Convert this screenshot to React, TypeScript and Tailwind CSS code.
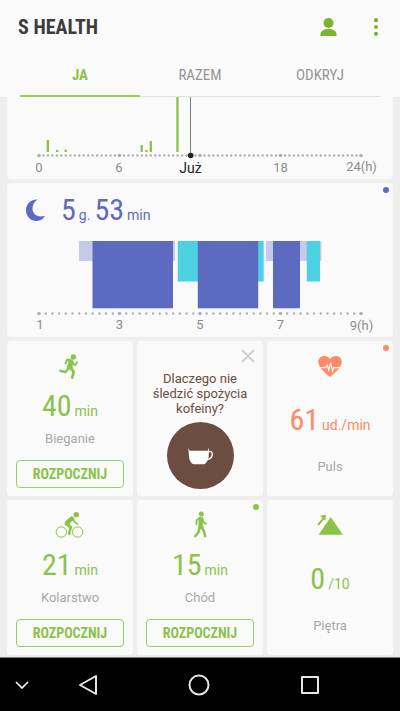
import React from "react";

const condensed = "font-['Roboto_Condensed','Roboto',sans-serif]";

function Dot({ className }: { className: string }) {
  return <span className={`absolute top-1 right-1 h-1.5 w-1.5 rounded-full ${className}`} />;
}

type AxisProps = { y: number; steps: number; majorEvery: number };

function DottedAxis({ y, steps, majorEvery }: AxisProps) {
  return (
    <g fill="#b0b0b0">
      {Array.from({ length: steps + 1 }, (_, i) => (
        <circle key={i} cx={39 + (322 * i) / steps} cy={y} r={i % majorEvery === 0 ? 1.8 : 1.2} />
      ))}
    </g>
  );
}

function StepsChart() {
  const bars = [
    [46.7, 140, 12],
    [56, 149.8, 2.2],
    [64.5, 149.5, 2.5],
    [140.5, 145, 7],
    [145.2, 150, 2],
    [149.7, 141, 11],
    [176.3, 97, 55],
  ];
  return (
    <svg viewBox="7 97 386 82" className="block w-full" role="img" aria-label="Kroki">
      {bars.map(([x, y, h]) => (
        <rect key={x} x={x} y={y} width="2.3" height={h} fill="#8bc34a" />
      ))}
      <DottedAxis y={155.5} steps={72} majorEvery={18} />
      <path d="M190.5 97V155" stroke="#808080" strokeWidth="1" />
      <circle cx="190.7" cy="155.5" r="2.8" fill="#212121" />
      <g fill="#8c8c8c" fontSize="13" textAnchor="middle">
        <text x="39" y="172">0</text>
        <text x="119" y="172">6</text>
        <text x="280.5" y="172">18</text>
        <text x="361.5" y="171">24(h)</text>
        <text x="190.5" y="173" fontSize="14" fill="#212121">Już</text>
      </g>
    </svg>
  );
}

function SleepChart() {
  return (
    <svg viewBox="7 236 386 101" className="block w-full" role="img" aria-label="Sen">
      <g fill="#c5cae9">
        <rect x="79" y="241" width="96" height="20" />
        <rect x="266" y="241" width="55.5" height="20" />
      </g>
      <g fill="#4dd0e1">
        <rect x="177.7" y="241" width="25" height="40.5" />
        <rect x="254" y="241" width="9.7" height="40.5" />
        <rect x="306.7" y="241" width="13.3" height="40.5" />
      </g>
      <g fill="#5c6bc0">
        <rect x="92.5" y="241" width="80.5" height="67.3" />
        <rect x="197.8" y="241" width="60.4" height="67.3" />
        <rect x="273" y="241" width="27" height="67.3" />
      </g>
      <DottedAxis y={313.5} steps={48} majorEvery={12} />
      <g fill="#8c8c8c" fontSize="13" textAnchor="middle">
        <text x="40" y="329">1</text>
        <text x="119.5" y="329">3</text>
        <text x="200" y="329">5</text>
        <text x="280.5" y="329">7</text>
        <text x="361.5" y="330">9(h)</text>
      </g>
    </svg>
  );
}

function Value({ value, unit, className }: { value: string; unit: string; className: string }) {
  return (
    <p className={`flex items-baseline gap-[3px] leading-8 ${className}`}>
      <span className={`text-[30px] ${condensed}`}>{value}</span>
      <span className="text-sm">{unit}</span>
    </p>
  );
}

type TileProps = { icon: React.ReactNode; value: string; unit: string; label: string; dot?: boolean };

function ActivityTile({ icon, value, unit, label, dot }: TileProps) {
  return (
    <section className="relative flex flex-col items-center rounded-sm bg-[#fafafa] px-[9px] pt-3 pb-2">
      {dot && <Dot className="bg-[#8bc34a]" />}
      {icon}
      <Value value={value} unit={unit} className="mt-[10px] text-[#8bc34a]" />
      <p className="mt-[9px] text-[13px] leading-4 text-[#a8a8a8]">{label}</p>
      <button
        type="button"
        className={`mt-[13px] h-7 w-full rounded-sm border border-[#9ccc65] text-sm font-bold text-[#8bc34a] ${condensed}`}
      >
        ROZPOCZNIJ
      </button>
    </section>
  );
}

function StatTile({ icon, value, unit, label, color, dot }: TileProps & { color: string }) {
  return (
    <section className="relative flex flex-col items-center rounded-sm bg-[#fafafa] pt-3">
      {dot && <Dot className="bg-[#ff8a65]" />}
      {icon}
      <Value value={value} unit={unit} className={`mt-6 ${color}`} />
      <p className="mt-[23px] text-[13px] leading-4 text-[#a8a8a8]">{label}</p>
    </section>
  );
}

const iconSize = "block h-[27px] w-[27px] shrink-0 overflow-visible";

const RunIcon = () => (
  <svg viewBox="171 54 81 81" className={iconSize} fill="none" stroke="#8bc34a" strokeLinejoin="round">
    <circle cx="220" cy="66" r="8" fill="#8bc34a" stroke="none" />
    <path d="M199 72L213 73L221 81L216 94L219 101L204 103L201 97L207 80Z" fill="#8bc34a" strokeWidth="2" />
    <path d="M210 75H201L196 87" strokeWidth="6" />
    <path d="M214 78L220 88L227 89L232 80" strokeWidth="6" />
    <path d="M207 98L197 111L178 107" strokeWidth="7" />
    <path d="M210 98L221 110L216 131" strokeWidth="8" />
  </svg>
);

const BikeIcon = () => (
  <svg viewBox="171 54 81 81" className={iconSize} fill="none" stroke="#8bc34a" strokeLinejoin="round">
    <circle cx="229" cy="62" r="8" fill="#8bc34a" stroke="none" />
    <circle cx="184" cy="114" r="15.5" strokeWidth="3" />
    <circle cx="233" cy="114" r="15.5" strokeWidth="3" />
    <path d="M216 67L223 74L214 83L207 90L215 98L211 106L204 97L195 92V84L205 74Z" fill="#8bc34a" strokeWidth="2" />
    <path d="M218 72L223 83L234 92" strokeWidth="5" />
    <path d="M200 88L212 99L207 122" strokeWidth="8" />
  </svg>
);

const WalkIcon = () => (
  <svg viewBox="169 54 81 81" className={iconSize} fill="none" stroke="#8bc34a" strokeLinejoin="round">
    <circle cx="212" cy="60" r="7.5" fill="#8bc34a" stroke="none" />
    <path d="M204 70H215L219 79L215 92L218 102L204 104L205 84Z" fill="#8bc34a" strokeWidth="2" />
    <path d="M208 71L198 79L197 93" strokeWidth="5.5" />
    <path d="M214 73L218 84L228 91" strokeWidth="5.5" />
    <path d="M208 98L203 115L192 129" strokeWidth="7.5" />
    <path d="M212 98L220 112L224 130" strokeWidth="7.5" />
  </svg>
);

const HeartIcon = () => (
  <svg viewBox="165 54 81 81" className={iconSize}>
    <path
      d="M204 126C198 121 170 101 169 82C168 69 178 63 187 63C196 63 201 67 204 73C207 67 212 63 221 63C230 63 240 69 239 82C238 101 210 121 204 126Z"
      fill="#ff8a65"
    />
    <path d="M170 98H190L196 91L200 106L206 84L212 109L216 98H238" fill="none" stroke="#fafafa" strokeWidth="3.5" />
  </svg>
);

const FloorsIcon = () => (
  <svg viewBox="165 54 81 81" className={iconSize} fill="#8bc34a">
    <path d="M206 69L243 122H170Z" />
    <path d="M168 93L184 74" stroke="#8bc34a" strokeWidth="6" />
    <path d="M174 65L192 62L190 80Z" />
  </svg>
);

const navButton = "flex flex-1 items-center justify-center";

export default function App() {
  return (
    <div className="flex min-h-screen flex-col bg-[#eeeeee] font-['Roboto',sans-serif]">
      <header className="bg-[#fafafa]">
        <div className="flex h-[53px] items-center pr-[21px] pl-[18px]">
          <h1 className={`flex-1 text-xl font-bold text-[#3c3c3c] ${condensed}`}>S HEALTH</h1>
          <button type="button" aria-label="Profil" className="mr-9">
            <svg viewBox="0 0 17 18" className="block h-[18px] w-[17px]" fill="#7cb52b">
              <circle cx="8.5" cy="5" r="5" />
              <path d="M0.5 18V16C0.5 13 4 11 8.5 11S16.5 13 16.5 16V18Z" />
            </svg>
          </button>
          <button type="button" aria-label="Więcej">
            <svg viewBox="0 0 6 18" className="block h-[18px] w-1.5" fill="#7cb52b">
              <circle cx="3" cy="2.2" r="2.1" />
              <circle cx="3" cy="9" r="2.1" />
              <circle cx="3" cy="15.8" r="2.1" />
            </svg>
          </button>
        </div>
        <div role="tablist" className={`mx-5 grid h-11 grid-cols-3 text-[15px] text-[#959595] ${condensed}`}>
          <button type="button" role="tab" aria-selected="true" className="border-b-2 border-[#92d450] pt-0.5 font-bold text-[#8bc34a]">
            JA
          </button>
          <button type="button" role="tab" aria-selected="false" className="border-b border-[#e2e2e2] pt-px">
            RAZEM
          </button>
          <button type="button" role="tab" aria-selected="false" className="border-b border-[#e2e2e2] pt-px">
            ODKRYJ
          </button>
        </div>
      </header>

      <main className="flex flex-1 flex-col gap-1 px-[7px] pb-0.5">
        <section className="rounded-b-sm bg-[#fafafa]">
          <StepsChart />
        </section>

        <section className="relative rounded-sm bg-[#fafafa]">
          <Dot className="bg-[#5c6bc0]" />
          <div className="flex h-[53px] items-center pl-[18px] text-[#5c6bc0]">
            <svg viewBox="0 0 20 22" className="block h-[22px] w-5" fill="#5c6bc0">
              <path d="M12.5 0.5C5 0.2 1 5.500 1 11.200C1 17 5.500 22 11.500 22C15.500 22 18.500 20 20 16.800C12 19.500 7.500 14.500 7.500 9.500C7.500 5.500 9.500 2.500 12.500 0.500Z" />
            </svg>
            <div className="ml-4 flex gap-1">
              <Value value="5" unit="g." className="" />
              <Value value="53" unit="min" className="" />
            </div>
          </div>
          <SleepChart />
        </section>

        <div className="grid grid-cols-3 gap-1">
          <ActivityTile icon={<RunIcon />} value="40" unit="min" label="Bieganie" />
          <section className="relative flex flex-col items-center rounded-sm bg-[#fafafa] pt-[30px] text-center">
            <button type="button" aria-label="Zamknij" className="absolute top-2 right-2">
              <svg viewBox="0 0 14 14" className="block h-3.5 w-3.5" stroke="#d0d0d0" strokeWidth="1.8">
                <path d="M1 1L13 13M13 1L1 13" />
              </svg>
            </button>
            <p className="text-[13px] leading-[15px] text-[#6d4c41]">
              Dlaczego nie
              <br />
              śledzić spożycia
              <br />
              kofeiny?
            </p>
            <div className="mt-[6px] flex h-[67px] w-[67px] items-center justify-center rounded-full bg-[#6d4c41]">
              <svg viewBox="171 335 75 54" className="block h-[18px] w-[25px]">
                <path d="M172 337L176 346H230L234 337L233 366C231 378 225 383 220 387H187C180 383 175 376 174 364Z" fill="#fff" />
                <path d="M232 350C239 346 244 350 244 357C243 367 235 372 227 373" fill="none" stroke="#fff" strokeWidth="4" />
              </svg>
            </div>
          </section>
          <StatTile icon={<HeartIcon />} value="61" unit="ud./min" label="Puls" color="text-[#ff8a65]" dot />
          <ActivityTile icon={<BikeIcon />} value="21" unit="min" label="Kolarstwo" />
          <ActivityTile icon={<WalkIcon />} value="15" unit="min" label="Chód" dot />
          <StatTile icon={<FloorsIcon />} value="0" unit="/10" label="Piętra" color="text-[#8bc34a]" />
        </div>
      </main>

      <nav className="flex h-[54px] border-t border-[#777] bg-black pr-[34px]">
        <button type="button" aria-label="Ukryj" className="flex w-8 items-center justify-end pr-[3px]">
          <svg viewBox="0 0 14 8" className="block h-2 w-3.5" fill="none" stroke="#fff" strokeWidth="1.6">
            <path d="M1 1L7 7L13 1" />
          </svg>
        </button>
        <button type="button" aria-label="Wstecz" className={navButton}>
          <svg viewBox="0 0 20 22" className="block h-[22px] w-5" fill="none" stroke="#e6e6e6" strokeWidth="2" strokeLinejoin="round">
            <path d="M18 2V20L2 11Z" />
          </svg>
        </button>
        <button type="button" aria-label="Ekran główny" className={navButton}>
          <svg viewBox="0 0 22 22" className="block h-[22px] w-[22px]" fill="none" stroke="#e6e6e6" strokeWidth="2">
            <circle cx="11" cy="11" r="9.5" />
          </svg>
        </button>
        <button type="button" aria-label="Ostatnie" className={navButton}>
          <svg viewBox="0 0 20 20" className="block h-5 w-5" fill="none" stroke="#e6e6e6" strokeWidth="2" strokeLinejoin="round">
            <rect x="2" y="2" width="16" height="16" />
          </svg>
        </button>
      </nav>
    </div>
  );
}
